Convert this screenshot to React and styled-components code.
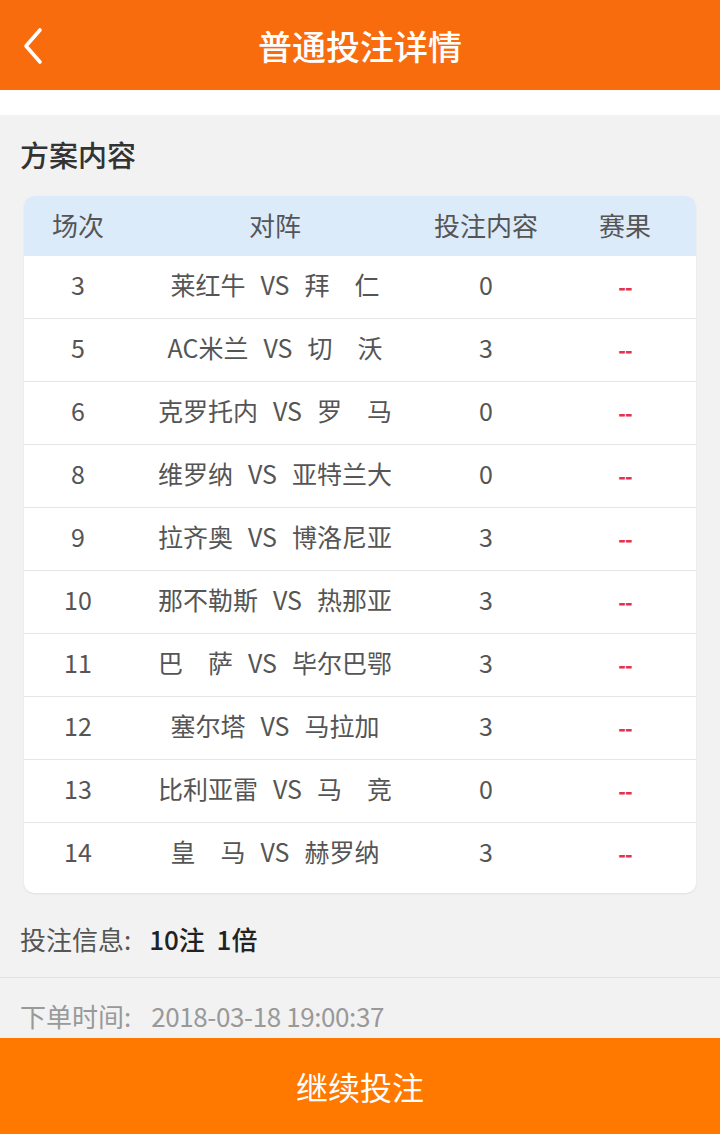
import React from "react";
import styled, { createGlobalStyle } from "styled-components";

const GlobalStyle = createGlobalStyle`
  html, body {
    margin: 0;
    padding: 0;
    background: #f2f2f2;
    font-family: "Noto Sans CJK SC", "Noto Sans", sans-serif;
  }
`;

const rows = [
  { no: "3", home: "莱红牛", away: "拜　仁", pick: "0" },
  { no: "5", home: "AC米兰", away: "切　沃", pick: "3" },
  { no: "6", home: "克罗托内", away: "罗　马", pick: "0" },
  { no: "8", home: "维罗纳", away: "亚特兰大", pick: "0" },
  { no: "9", home: "拉齐奥", away: "博洛尼亚", pick: "3" },
  { no: "10", home: "那不勒斯", away: "热那亚", pick: "3" },
  { no: "11", home: "巴　萨", away: "毕尔巴鄂", pick: "3" },
  { no: "12", home: "塞尔塔", away: "马拉加", pick: "3" },
  { no: "13", home: "比利亚雷", away: "马　竞", pick: "0" },
  { no: "14", home: "皇　马", away: "赫罗纳", pick: "3" },
];

function App() {
  return (
    <Page>
      <GlobalStyle />
      <Header>
        <BackButton aria-label="back">
          <svg width="22" height="38" viewBox="0 0 22 38" fill="none">
            <path
              d="M18 3 L4 19 L18 35"
              stroke="#fff"
              strokeWidth="3.6"
              strokeLinecap="round"
              strokeLinejoin="round"
            />
          </svg>
        </BackButton>
        <Title>普通投注详情</Title>
      </Header>
      <WhiteStrip />
      <Section>
        <SectionTitle>方案内容</SectionTitle>
        <Card>
          <HeadRow>
            <Cell>场次</Cell>
            <Cell>对阵</Cell>
            <Cell>投注内容</Cell>
            <Cell>赛果</Cell>
          </HeadRow>
          {rows.map((r, i) => (
            <Row key={r.no} last={i === rows.length - 1}>
              <Cell>{r.no}</Cell>
              <Cell>
                <Match>
                  {r.home}
                  <Vs>VS</Vs>
                  {r.away}
                </Match>
              </Cell>
              <Cell>{r.pick}</Cell>
              <Cell>
                <Dash>--</Dash>
              </Cell>
            </Row>
          ))}
        </Card>
      </Section>
      <InfoLine>
        <Label>投注信息:</Label>
        <Value>10注&nbsp;&nbsp;1倍</Value>
      </InfoLine>
      <TimeLine>
        <span>下单时间:</span>
        <TimeValue>2018-03-18 19:00:37</TimeValue>
      </TimeLine>
      <Footer>继续投注</Footer>
    </Page>
  );
}

export default App;

const Page = styled.div`
  width: 720px;
  height: 1134px;
  display: flex;
  flex-direction: column;
  background: #f2f2f2;
  overflow: hidden;
`;

const Header = styled.div`
  height: 90px;
  flex-shrink: 0;
  background: #f86c0e;
  display: flex;
  align-items: center;
  justify-content: center;
  position: relative;
`;

const BackButton = styled.div`
  position: absolute;
  left: 22px;
  top: 27px;
  display: flex;
`;

const Title = styled.h1`
  margin: 0;
  color: #fff;
  font-size: 34px;
  font-weight: 500;
`;

const WhiteStrip = styled.div`
  height: 25px;
  flex-shrink: 0;
  background: #fff;
`;

const Section = styled.div`
  padding: 0 24px;
  display: flex;
  flex-direction: column;
`;

const SectionTitle = styled.h2`
  margin: 0 0 0 -4px;
  height: 81px;
  line-height: 78px;
  font-size: 29px;
  font-weight: 500;
  color: #333;
`;

const Card = styled.div`
  background: #fff;
  border-radius: 10px;
  overflow: hidden;
  padding-bottom: 7px;
  box-shadow: 0 1px 2px rgba(0, 0, 0, 0.08);
`;

const gridCols = "108px 286px 136px 142px";

const HeadRow = styled.div`
  display: grid;
  grid-template-columns: ${gridCols};
  height: 60px;
  padding-bottom: 3px;
  box-sizing: border-box;
  align-items: center;
  background: #dcebfa;
  color: #555;
  font-size: 26px;
`;

const Row = styled.div`
  display: grid;
  grid-template-columns: ${gridCols};
  height: 63px;
  box-sizing: border-box;
  padding-bottom: 7px;
  align-items: center;
  color: #555;
  font-size: 25px;
  border-bottom: ${(p) => (p.last ? "none" : "1px solid #e6e6e6")};
`;

const Cell = styled.div`
  text-align: center;
  white-space: nowrap;
`;

const Match = styled.span`
  display: inline-flex;
  align-items: center;
`;

const Vs = styled.span`
  margin: 0 15px;
`;

const Dash = styled.span`
  color: #e2344d;
  font-size: 20px;
  font-weight: 900;
  letter-spacing: -1px;
`;

const InfoLine = styled.div`
  height: 85px;
  box-sizing: border-box;
  padding: 6px 20px 0 20px;
  display: flex;
  align-items: center;
  gap: 18px;
  font-size: 26px;
  border-bottom: 1px solid #e0e0e0;
`;

const Label = styled.span`
  color: #555;
`;

const Value = styled.span`
  color: #222;
  font-weight: 500;
`;

const TimeLine = styled.div`
  flex: 1;
  padding: 14px 20px 0 20px;
  display: flex;
  align-items: center;
  gap: 20px;
  font-size: 26px;
  color: #999;
`;

const TimeValue = styled.span`
  letter-spacing: -0.4px;
`;

const Footer = styled.div`
  height: 96px;
  flex-shrink: 0;
  background: #ff7800;
  color: #fff;
  font-size: 32px;
  display: flex;
  align-items: center;
  justify-content: center;
`;
